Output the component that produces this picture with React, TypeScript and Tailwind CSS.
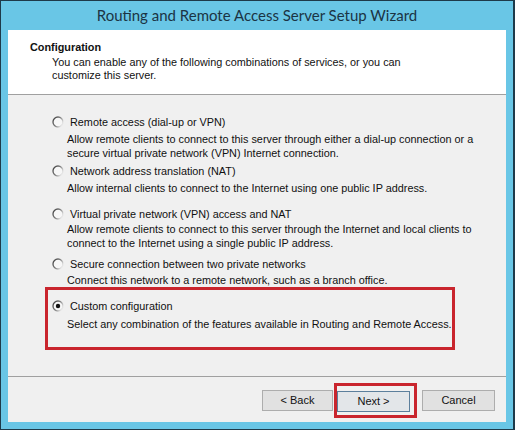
import React from 'react';

const body = { fontFamily: '"Liberation Sans", Arial, sans-serif' };

const Radio: React.FC<{ checked?: boolean }> = ({ checked }) => (
  <svg width="12" height="12" viewBox="0 0 12 12" className="shrink-0">
    <defs>
      <linearGradient id={checked ? 'rgc' : 'rgu'} x1="0" y1="0" x2="1" y2="0.6">
        <stop offset="0" stopColor="#3a3a3a" />
        <stop offset="0.55" stopColor="#7c7c7c" />
        <stop offset="1" stopColor="#e6e6e6" />
      </linearGradient>
    </defs>
    <circle cx="6" cy="6" r="5" fill="#f7f7f7" stroke={`url(#${checked ? 'rgc' : 'rgu'})`} strokeWidth="1.3" />
    {checked && <circle cx="6" cy="6" r="2.2" fill="#111" />}
  </svg>
);

interface OptionProps {
  label: string;
  lines: string[];
  checked?: boolean;
  gap: string;
}

const Option: React.FC<OptionProps> = ({ label, lines, checked, gap }) => (
  <div className="flex flex-col">
    <div className="flex items-center h-[14px] gap-[6px]">
      <Radio checked={checked} />
      <span className="leading-[14px]">{label}</span>
    </div>
    <div className={`${gap} pl-[15px] leading-[14px]`}>
      {lines.map((l) => (
        <div key={l} className="whitespace-nowrap">{l}</div>
      ))}
    </div>
  </div>
);

export default function App() {
  return (
    <div className="w-[515px] h-[430px] bg-[#69c6e6] border border-r-2 border-[#1e3a4a] flex flex-col px-[7px] pb-[7px]">
      {/* title bar */}
      <div
        className="h-[29px] flex items-center justify-center text-[15px] text-[#1b3444] pb-[1px]"
        style={{ fontFamily: 'Lato, "Open Sans", sans-serif' }}
      >
        Routing and Remote Access Server Setup Wizard
      </div>

      <div className="flex-1 bg-[#f0f0f0] flex flex-col text-[10.85px] text-[#111]" style={body}>
        {/* header */}
        <div className="h-[65px] bg-white border-b border-[#a0a0a0] pt-[10px] pl-[22px]">
          <div className="font-bold leading-[14px]">Configuration</div>
          <div className="pl-[22px] leading-[13px] mt-[2px]">
            <div>You can enable any of the following combinations of services, or you can</div>
            <div>customize this server.</div>
          </div>
        </div>

        {/* options */}
        <div className="flex flex-col pl-[44px] pt-[20px] h-[281px]">
          <Option
            label="Remote access (dial-up or VPN)"
            gap="mt-[3px]"
            lines={[
              'Allow remote clients to connect to this server through either a dial-up connection or a',
              'secure virtual private network (VPN) Internet connection.',
            ]}
          />
          <div className="mt-[4px]">
            <Option
              label="Network address translation (NAT)"
              gap="mt-[3px]"
              lines={['Allow internal clients to connect to the Internet using one public IP address.']}
            />
          </div>
          <div className="mt-[12px]">
            <Option
              label="Virtual private network (VPN) access and NAT"
              gap="mt-[1px]"
              lines={[
                'Allow remote clients to connect to this server through the Internet and local clients to',
                'connect to the Internet using a single public IP address.',
              ]}
            />
          </div>
          <div className="mt-[7px]">
            <Option
              label="Secure connection between two private networks"
              gap="mt-[2px]"
              lines={['Connect this network to a remote network, such as a branch office.']}
            />
          </div>
          <div className="-ml-[7px] w-[410px] border-[3px] border-[#c9252d] pl-[4px] pt-[9px] pb-[16px]">
            <Option
              label="Custom configuration"
              checked
              gap="mt-[4px]"
              lines={['Select any combination of the features available in Routing and Remote Access.']}
            />
          </div>
        </div>

        {/* separator */}
        <div className="h-px bg-[#a0a0a0]" />

        {/* buttons */}
        <div className="flex items-center justify-end pr-[11px] mt-[6px]">
          <button className="w-[71px] h-[21px] mr-px bg-[#e1e1e1] border border-[#adadad] text-[11px]">
            &lt; Back
          </button>
          <div className="border-[3px] border-[#c9252d] pt-[5px] pb-[3px] pr-[4px]">
            <button className="w-[73px] h-[21px] bg-[#e3e6e9] border border-[#5c7f9c] text-[11px] block">
              Next &gt;
            </button>
          </div>
          <button className="w-[73px] h-[21px] ml-[5px] bg-[#e1e1e1] border border-[#adadad] text-[11px]">
            Cancel
          </button>
        </div>
      </div>
    </div>
  );
}
